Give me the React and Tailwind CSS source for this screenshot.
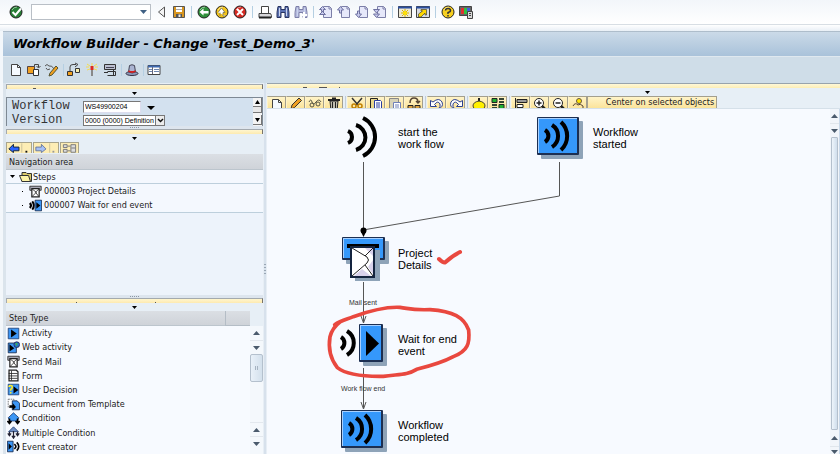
import clsx from 'clsx';

const Svg = ({ children, className = 'size-4', box = '0 0 16 16' }) => (
  <svg viewBox={box} className={clsx('shrink-0', className)} fill="none" stroke="#222" strokeWidth="1" aria-hidden="true">
    {children}
  </svg>
);

// Circles with a symbol in the standard toolbar
const Ball = ({ fill, children }) => (
  <Svg>
    <circle cx="8" cy="8" r="6" fill={fill} stroke="#222" />
    <path d="M4 6Q6 3 9 3" stroke="#fff" opacity=".5" />
    {children}
  </Svg>
);

const Binoculars = ({ fill = '#5a70b0', stroke = '#2a3560', children }) => (
  <Svg>
    <path d="M3 2.500h3v3h4v-3h3l1 6v5h-4v-5h-4v5H2v-5z" fill={fill} stroke={stroke} />
    <path d="M4.500 4v8M11.500 4v8" stroke="#c9d3ee" />
    {children}
  </Svg>
);

const PageArrow = ({ d }) => (
  <Svg>
    <path d="M5.500 2.500h6l2 2v9h-8z" fill="#e6e8fa" stroke="#7c7fa8" />
    <path d="M11 2.500v2.500h2.500" stroke="#7c7fa8" />
    <path d={d} fill="#c9cbee" stroke="#6e71a0" />
  </Svg>
);

const BlankPage = () => (
  <Svg>
    <path d="M3.500 2.500h6l3 3v8h-9z" fill="#f5faff" stroke="#444" />
    <path d="M9.500 2.500v3h3" stroke="#444" />
  </Svg>
);

const standardIcons = [
  { name: 'Back list', icon: <Svg><path d="M11.500 3v10l-6-5z" fill="#f3f3f3" stroke="#555" /></Svg> },
  {
    name: 'Save',
    icon: (
      <Svg>
        <path d="M2.500 2.500h11v11h-11z" fill="#d9961e" stroke="#555" />
        <path d="M5 3h6v5H5z" fill="#fff" stroke="none" />
        <path d="M5 5.500h6" stroke="#aaa" />
        <path d="M5 10h6v3.500H5z" fill="#555" stroke="none" />
        <path d="M8.500 10.500v2.500" stroke="#eee" strokeWidth="2" />
      </Svg>
    ),
  },
  null,
  { name: 'Back', icon: <Ball fill="#2f8f3a"><path d="M3.500 8 7.500 4.500V7h5v2.500h-5V11.500z" fill="#fff" stroke="none" /></Ball> },
  { name: 'Exit', icon: <Ball fill="#f4c51c"><path d="M4 8.500 7.500 4 11 8.500H9V12h3M6 8.500V12" fill="#fff" stroke="#665" strokeWidth=".7" /></Ball> },
  { name: 'Cancel', icon: <Ball fill="#d42a22"><path d="m5 5 6 6M11 5l-6 6" stroke="#fff" strokeWidth="2" /></Ball> },
  null,
  {
    name: 'Print',
    icon: (
      <Svg>
        <path d="M4.500 2.500h7v7h-7z" fill="#fff" stroke="#444" />
        <path d="M2 9.500h11.500l1 2v2H2z" fill="#d7d7da" stroke="#444" />
        <path d="M2 13.500h12" strokeWidth="2" />
      </Svg>
    ),
  },
  { name: 'Find', icon: <Binoculars /> },
  { name: 'Find next', icon: <Binoculars fill="#b5b9dc" stroke="#7c7fa8"><path d="M11 8v6M8 11h6" stroke="#fff" strokeWidth="2" /></Binoculars> },
  null,
  { name: 'First page', icon: <PageArrow d="M1.500 5.500 4.500 2.500l3 3h-2v2h-2v-2zM1.500 10.500 4.500 7.500l3 3z" /> },
  { name: 'Previous page', icon: <PageArrow d="M1.500 6 4.500 2.500l3 3.500h-2v3h-2v-3z" /> },
  { name: 'Next page', icon: <PageArrow d="M1.500 10 4.500 13.500l3-3.500h-2v-3h-2v3z" /> },
  { name: 'Last page', icon: <PageArrow d="M1.500 5.500h6l-3 3.500zM1.500 10h6l-3 3.500z" /> },
  null,
  {
    name: 'New session',
    icon: (
      <Svg>
        <path d="M1.500 2.500h13v11h-13z" fill="#ece7d5" stroke="#444" />
        <path d="M1 3.500h14" stroke="#2b4f9e" strokeWidth="2" />
        <path d="M8 5v8M4 9h8M5 6l6 6M11 6l-6 6" stroke="#d9b400" />
        <circle cx="8" cy="9" r="2" fill="#ffe100" stroke="none" />
      </Svg>
    ),
  },
  {
    name: 'Create shortcut',
    icon: (
      <Svg>
        <path d="M1.500 2.500h13v11h-13z" fill="#d8dbe2" stroke="#444" />
        <path d="M1 3.500h14" stroke="#2b4f9e" strokeWidth="2" />
        <path d="M3.500 13V10l4-3H6V5.500h5.500V11H10V9l-4 4z" fill="#ffd800" stroke="#443" strokeWidth=".7" />
      </Svg>
    ),
  },
  null,
  { name: 'Help', icon: <Ball fill="#f6cf1e"><path d="M5.500 6.500Q5.500 4.500 8 4.500T10.500 6.500Q10.500 8 8 8.500V10M8 11v1.500" stroke="#333" strokeWidth="1.500" /></Ball> },
  {
    name: 'Customize layout',
    icon: (
      <Svg>
        <path d="M1.500 2.500h12v9h-12z" fill="#666" stroke="#444" />
        <path d="M4.500 4v6" stroke="#e03030" strokeWidth="3" />
        <path d="M7.500 4v6" stroke="#30c040" strokeWidth="3" />
        <path d="M10.500 4v4" stroke="#4060e0" strokeWidth="3" />
        <path d="M9.500 7.500h5v7h-5z" fill="#d8d8d8" stroke="#444" />
        <path d="M11 9.500h2M11 11.500h2" stroke="#444" />
      </Svg>
    ),
  },
];

const appIcons = [
  { name: 'Create', icon: <BlankPage /> },
  {
    name: 'Other object',
    icon: (
      <Svg>
        <path d="M1.500 4.500h7v7h-7z" fill="#f0a020" stroke="#544" />
        <path d="M7.500 7.500h5v6h-5z" fill="#fff" stroke="#333" />
        <path d="M8.500 4.500V2.500h4v3M10.500 4l2 2 2-2" stroke="#444" />
      </Svg>
    ),
  },
  {
    name: 'Display or change',
    icon: (
      <Svg>
        <path d="M1 4q2-3 4 0 3-1 5 3M2 6q1 3 4 1" stroke="#555" />
        <path d="m6 11 6-7 2 2-6 7-3 1z" fill="#f0a020" stroke="#553" />
      </Svg>
    ),
  },
  null,
  {
    name: 'Where used',
    icon: (
      <Svg>
        <path d="M4 9V5Q4 2.500 7 2.500h3M9 1l3 1.500L9 5" stroke="#444" />
        <path d="M1.500 9.500h5v4h-5z" fill="#f0a020" stroke="#333" />
        <path d="M9.500 6.500h4v4h-4z" fill="#f6eeb0" stroke="#333" />
      </Svg>
    ),
  },
  {
    name: 'Activate',
    icon: (
      <Svg>
        <path d="M8 1v3M3 2l3 2M13 2l-3 2M3 8l3-1M13 8l-3-1M2 5h3M11 5h3" stroke="#f5dc50" />
        <path d="M8 8v6" stroke="#888" strokeWidth="2" />
        <path d="M8 4v4" stroke="#dd2a20" strokeWidth="3" />
      </Svg>
    ),
  },
  {
    name: 'Test',
    icon: (
      <Svg>
        <path d="M2.500 2.500h11v5h-11z" fill="#bcbfd0" stroke="#333" />
        <path d="M4 5.500h8" stroke="#445" />
        <path d="M5.500 9.500h8v4h-8M2 10.500h4M11.500 8v5" stroke="#333" />
      </Svg>
    ),
  },
  null,
  {
    name: 'Header',
    icon: (
      <Svg>
        <ellipse cx="8" cy="11.500" rx="6" ry="2" fill="#8d98ba" stroke="#334" />
        <path d="M4.500 10 5.500 3.500q2.500-1.500 5 0l1 6.500q-3 2-7 0z" fill="#aab4d2" stroke="#445" />
        <path d="M4.500 9q3.500 2 7 0" stroke="#d32020" strokeWidth="2" />
      </Svg>
    ),
  },
  null,
  {
    name: 'Overview',
    icon: (
      <Svg>
        <path d="M2 3.500h12v9H2z" fill="#fff" stroke="#444" />
        <path d="M2 4.500h12" stroke="#3d69b0" strokeWidth="2" />
        <path d="M6.500 5v7" stroke="#667" />
        <path d="M3 7.500h3M3 9.500h3M8 7.500h5M8 9.500h5" stroke="#6d86b0" />
      </Svg>
    ),
  },
];

const editIcons = [
  { name: 'New', icon: <BlankPage /> },
  { name: 'Change', icon: <Svg><path d="m3 12 1-4 7-7 2.500 2.500-7 7z" fill="#f0a020" stroke="#333" /></Svg> },
  { name: 'Display', icon: <Svg><path d="M2 5q2-4 3 0t4 0q3-4 5 0M3 8a2 2 0 1 0 4 0 2 2 0 1 0-4 0M9 7a2 2 0 1 0 4 0 2 2 0 1 0-4 0" stroke="#554" /></Svg> },
  { name: 'Delete', icon: <Svg><path d="M2 3h12M6 1.500h4" strokeWidth="2" /><path d="M4 4h8l-1 10H5z" fill="#c2bfb0" /><path d="M6.500 5v8M9.500 5v8" /></Svg> },
  null,
  { name: 'Cut', icon: <Svg><path d="m3 1 6 7M13 1 7 8" stroke="#333" strokeWidth="1.500" /><circle cx="5" cy="9" r="2" stroke="#c08000" strokeWidth="1.500" /><circle cx="11" cy="9" r="2" stroke="#c08000" strokeWidth="1.500" /></Svg> },
  { name: 'Copy', icon: <Svg><path d="M2.500 1.500h7v10h-7z" fill="#e8d68a" /><path d="M6.500 3.500h6l1 1v9h-7z" fill="#fff" stroke="#2a3fa0" /><path d="M8 6h4M8 8h4M8 10h4" stroke="#2a3fa0" /></Svg> },
  { name: 'Paste', icon: <Svg><path d="M2.500 1.500h9v10h-9z" fill="#d8d3b8" stroke="#888" /><path d="M6.500 5.500h7v8h-7z" fill="#fff" stroke="#7080b8" /><path d="M8 8h4M8 10h4" stroke="#7080b8" /></Svg> },
  { name: 'Sort', icon: <Svg><path d="M4 6q0-5 4-5 4 0 4 4M10 4l2 2 2-2" stroke="#543" strokeWidth="1.500" /><path d="M2 8.500h5v4H2zM9 8.500h5v4H9z" fill="#d8a040" /></Svg> },
  null,
  { name: 'Undo', icon: <Svg><path d="M1.500 3.500v6h6l-2-2Q9 3 11 7q1 3-2 5 6-2 4-7-3-5-9 0z" fill="#fff" stroke="#2a3f90" /></Svg> },
  { name: 'Redo', icon: <Svg><path d="M14.500 3.500v6h-6l2-2Q7 3 5 7q-1 3 2 5-6-2-4-7 3-5 9 0z" fill="#fff" stroke="#2a3f90" /></Svg> },
  null,
  { name: 'Insert step', icon: <Svg><path d="M8 1v4" strokeWidth="2" /><path d="M2 9q0-4 6-5 6 1 6 5l-2 5H4z" fill="#fff000" stroke="#443" /></Svg> },
  { name: 'Layout', icon: <Svg><path d="M2 1.500h5v4H2zM9 7.500h5v4H9z" fill="#20b030" /><path d="M9 2h5M9 5h5M2 8h5M2 11h5" stroke="#343" strokeWidth="2" /></Svg> },
  null,
  { name: 'Align', icon: <Svg><path d="M2.500 1v12" /><path d="M4 2.500h10v3H4z" fill="#999" /><path d="M4 7.500h6v3H4z" fill="#fff" /></Svg> },
  { name: 'Zoom in', icon: <Svg><circle cx="7" cy="6" r="4.500" fill="#fff" /><path d="M4.500 6h5M7 3.500v5" strokeWidth="1.500" /><path d="m10 9 4 4" strokeWidth="2.500" /></Svg> },
  { name: 'Zoom out', icon: <Svg><circle cx="7" cy="6" r="4.500" fill="#fff" /><path d="M4.500 6h5" strokeWidth="1.500" /><path d="m10 9 4 4" strokeWidth="2.500" /></Svg> },
  { name: 'Agents', icon: <Svg><circle cx="9" cy="4" r="2.500" fill="#ffe500" stroke="#654" /><path d="M3 9q2-4 5-1 2-2 5 1v3" stroke="#543" /></Svg> },
];

const MailIcon = () => (
  <Svg className="size-[13px]">
    <path d="M1 1.500h14v5H1z" fill="#a8a8b4" />
    <path d="M3.500 4.500h9v10h-9z" fill="#fff" strokeWidth="1.500" />
    <path d="m4 5 5 4-5 5M12 5 8 9l4 5" />
  </Svg>
);

const WaitIcon = () => (
  <Svg className="size-[13px]">
    <path d="M1 5q3 3 0 6M4 3q4 5 0 10" strokeWidth="2.500" stroke="#000" />
    <path d="M7.500 1.500h8v13h-8z" fill="#3c96f5" stroke="#124" />
    <path d="M9 4v8l5-4z" fill="#000" stroke="none" />
  </Svg>
);

const BlueSquare = () => <path d="M1.500 1.500h13v13h-13z" fill="#3c96f5" stroke="#1d3c70" />;

const stepTypes = [
  { name: 'Activity', icon: <Svg className="size-[13px]"><BlueSquare /><path d="M5 3v10l7-5z" fill="#000" stroke="none" /></Svg> },
  { name: 'Web activity', icon: <Svg className="size-[13px]"><path d="M1.500 2.500h10v12h-10z" fill="#3c96f5" stroke="#124" /><path d="M3 4v9l6-4z" fill="#000" stroke="none" /><circle cx="12" cy="4.500" r="3.500" fill="#2674c8" stroke="#225" /><path d="M10 3q2-1 3 0l-1 3z" fill="#41b54b" stroke="none" /></Svg> },
  { name: 'Send Mail', icon: <MailIcon /> },
  { name: 'Form', icon: <Svg className="size-[13px]"><path d="M2.500 1.500h9l2 2v11h-11z" fill="#fff" strokeWidth="1.500" /><path d="M2 5.500h11M2 8.500h11M2 11.500h11M5.500 2v12" /></Svg> },
  { name: 'User Decision', icon: <Svg className="size-[13px]"><BlueSquare /><path d="M2.500 5q0-2 2-2t2 2q0 2-2 3v1.500M4.500 11v2" stroke="#ffec20" strokeWidth="2" /><path d="M8 4v9l6-4.500z" fill="#000" stroke="none" /></Svg> },
  { name: 'Document from Template', icon: <Svg className="size-[13px]"><path d="M1.500 1.500h7v10h-7z" fill="#fff" stroke="#666" strokeDasharray="2 1" /><path d="M6.500 3.500h6l3 3v8h-9z" fill="#3c96f5" stroke="#124" /><path d="M3 9h4V6l4 5-4 4v-3H3z" fill="#000" stroke="none" /></Svg> },
  { name: 'Condition', icon: <Svg className="size-[13px]"><path d="m8 1 6.500 6-2 4h-9l-2-4z" fill="#3c96f5" stroke="#1d3c70" /><path d="M3 8v6M13 8v6M.500 11 3 14l2.500-3M10.500 11l2.500 3 2.500-3" stroke="#000" strokeWidth="2" /></Svg> },
  { name: 'Multiple Condition', icon: <Svg className="size-[13px]"><path d="m8 1 6 6H2z" fill="#6d8dc4" stroke="#1d3c70" /><path d="M8 6v9M3 7v4M13 7v4M1 9l2 3 2-3M11 9l2 3 2-3M6 12l2 3 2-3" stroke="#223" strokeWidth="1.500" /></Svg> },
  { name: 'Event creator', icon: <Svg className="size-[13px]"><path d="M.500 1.500h7v13h-7z" fill="#3c96f5" stroke="#124" /><path d="M2 4v8l4-4z" fill="#000" stroke="none" /><path d="M9 5q4 3 0 6M12 3q5 5 0 10" stroke="#000" strokeWidth="2" /></Svg> },
];

const Tri = ({ up = false, className = 'w-[7px] text-[#4a5a6c]' }) => (
  <svg viewBox="0 0 8 4" className={clsx('h-1 shrink-0', className)} fill="currentColor" preserveAspectRatio="none" aria-hidden="true">
    <path d={up ? 'M0 4h8L4 0z' : 'M0 0h8L4 4z'} />
  </svg>
);

const IconRow = ({ items, sep }) =>
  items.map((item, i) =>
    item ? (
      <button key={i} type="button" aria-label={item.name} className="size-4 shrink-0">
        {item.icon}
      </button>
    ) : (
      <span key={i} className={clsx('flex h-3 justify-center', sep)}>
        <span className="w-px bg-[#b5cfe2]" />
      </span>
    )
  );

// Collapsed toolbar of a docked pane, with the drag handle below it
const PaneTop = ({ children }) => (
  <div className="shrink-0">
    <div className="flex h-[5px] border border-b-0 border-t-[#a3a9ae] border-l-[#a3a9ae] border-r-[#77736a] bg-gradient-to-b from-[#fff6cf] to-[#fdeab0]">
      {children}
    </div>
    <div className="flex h-2 items-center justify-center">
      <svg viewBox="0 0 5 3" className="h-[3px] w-[5px]" aria-hidden="true">
        <path d="M0 0h5L2.500 3z" fill="#000" />
      </svg>
    </div>
  </div>
);

const Grip = () => (
  <div className="flex h-[3px] shrink-0 items-center justify-center gap-px bg-[#dde5ee]">
    {[0, 1, 2, 3, 4].map((i) => (
      <span key={i} className="size-px bg-[#8d98a5]" />
    ))}
  </div>
);

const ListScroll = () => (
  <div className="flex w-[13px] flex-col bg-[#f4f8fc]">
    <button type="button" aria-label="Scroll up" className="flex h-[14px] items-center justify-center"><Tri up /></button>
    <button type="button" aria-label="Page down" className="flex h-[14px] items-center justify-center border-t border-[#e3e8ee]"><Tri /></button>
    <div className="flex h-7 items-center justify-center rounded-[2px] border border-[#b4c0cd] bg-gradient-to-r from-[#e9f1f9] to-[#d3e0ec]">
      <span className="h-1 w-[3px] border-x border-[#a6b3c1]" />
    </div>
    <div className="grow" />
    <button type="button" aria-label="Page up" className="flex h-[14px] items-center justify-center border-t border-[#e3e8ee]"><Tri up /></button>
    <button type="button" aria-label="Scroll down" className="mb-1 flex h-[14px] items-center justify-center border-t border-[#e3e8ee]"><Tri /></button>
  </div>
);

const NavPanel = () => (
  <aside className="flex w-[257px] shrink-0 flex-col pt-px">
    <PaneTop><span className="ml-[26px] mt-[3px] h-px w-[3px] bg-[#555]" /></PaneTop>

    <div className="flex h-[29px] shrink-0 border border-b-0 border-[#7e8994] bg-[#d3e1ef]">
      <div className="grow overflow-hidden pl-[5px] font-['Liberation_Mono','Courier_New',monospace] text-[12px] text-[#333]">
        <div className="flex h-[15px] items-center">
          <label htmlFor="workflow" className="w-[71px]">Workflow</label>
          <input id="workflow" defaultValue="WS49900204" className="mt-[2px] h-3 w-[58px] border border-r-[#dde] border-b-[#dde] border-[#777] bg-white px-px font-['Liberation_Sans',Arial,sans-serif] text-[7px] text-black" />
          <Tri className="ml-[6px] mt-1 w-2 text-black" />
        </div>
        <div className="flex h-[14px] items-center">
          <label htmlFor="version" className="w-[71px]">Version</label>
          <div className="relative">
            <select id="version" className="block h-[11px] w-[82px] appearance-none border border-[#777] bg-white pl-px font-['Liberation_Sans',Arial,sans-serif] text-[7px] leading-[9px] text-black">
              <option>0000 (0000) Definition</option>
            </select>
            <span className="pointer-events-none absolute inset-y-0 right-0 flex w-[10px] items-center justify-center border border-[#777] bg-[#ececec]">
              <svg viewBox="0 0 7 5" className="h-[5px] w-[7px]" fill="none" stroke="#111" strokeWidth="1.500"><path d="m1 1 2.500 2.500L6 1" /></svg>
            </span>
          </div>
        </div>
      </div>
      <div className="flex w-[9px] flex-col bg-[#f4f4f4]">
        <button type="button" aria-label="Form up" className="flex h-[9px] items-center justify-center border-r border-b border-[#777]"><Tri up className="w-[5px] text-black" /></button>
        <div className="h-[6px] border-r border-b border-[#777] bg-[#e8e8e8]" />
        <button type="button" aria-label="Form down" className="mt-[2px] flex h-[10px] items-center justify-center border-r border-b border-[#777]"><Tri className="w-[5px] text-black" /></button>
      </div>
    </div>
    <Grip />

    <PaneTop />
    <div className="flex h-3 shrink-0 gap-px overflow-hidden pb-px">
      <button type="button" aria-label="Previous" className="flex w-[26px] border border-b-0 border-[#a8a48c] bg-[#fdedb5]">
        <svg viewBox="0 0 26 10" className="h-[10px] w-[26px]"><path d="m2 6 5-5v3h6v4H7v2z" fill="#2a63ff" stroke="#123" /><path d="M16 0v10" stroke="#c9c09a" /><path d="M20 9h2" stroke="#111" strokeWidth="2" /></svg>
      </button>
      <button type="button" aria-label="Next" className="flex w-[26px] border border-b-0 border-[#a8a48c] bg-[#fdedb5]">
        <svg viewBox="0 0 26 10" className="h-[10px] w-[26px]"><path d="M13 6 8 1v3H2v4h6v2z" fill="#a5bff5" stroke="#68789a" /><path d="M17 0v10" stroke="#c9c09a" /><path d="M20 9h2" stroke="#999" strokeWidth="2" /></svg>
      </button>
      <button type="button" aria-label="Overview tree" className="flex w-[19px] border border-b-0 border-[#a8a48c] bg-[#fdedb5]">
        <svg viewBox="0 0 18 10" className="h-[10px] w-[18px]" fill="#ddd" stroke="#777"><path d="M2.500 1.500h4v3h-4zM2.500 6.500h4v3h-4zM7 3h3M7 8h3M10.500 1.500h5v8h-5zM11 5h4" /></svg>
      </button>
    </div>

    <h2 className="flex h-4 shrink-0 items-center border-b border-[#bcc5cd] bg-gradient-to-b from-[#dbdfe4] to-[#cfd3d9] pl-[3px]">Navigation area</h2>
    <ul className="shrink-0 bg-[#f4f8fe]">
      <li>
        <div className="flex h-[14px] items-center gap-1 border-b border-[#bdcfdc] pl-1">
          <svg viewBox="0 0 5 3" className="h-[3px] w-[5px]"><path d="M0 0h5L2.500 3z" /></svg>
          <div className="flex items-center">
            <svg viewBox="0 0 14 11" className="h-[11px] w-[14px]" stroke="#333"><path d="M3 1.500h4l1 1h4.500v8H3z" fill="#d9c869" /><path d="M.500 4.500h9l2 6H3z" fill="#fdf3a5" /></svg>
            Steps
          </div>
        </div>
        <ul className="border-b border-[#bdcfdc]">
          <li className="flex h-[14px] items-center gap-[2px] pl-4"><span className="mr-1 size-px bg-black" /><MailIcon />000003 Project Details</li>
          <li className="flex h-[14px] items-center gap-[2px] pl-4"><span className="mr-1 size-px bg-black" /><WaitIcon />000007 Wait for end event</li>
        </ul>
      </li>
    </ul>
    <div className="h-[82px] shrink-0 bg-[#edf3fb]" />
    <Grip />

    <PaneTop>
      <span className="ml-[69px] mt-[3px] size-px bg-[#555]" />
      <span className="ml-[78px] mt-[3px] size-px bg-[#555]" />
    </PaneTop>
    <div className="flex h-[15px] shrink-0 pr-[13px]">
      <h2 className="flex grow items-center border-b border-[#bcc5cd] bg-gradient-to-b from-[#dbdfe4] to-[#cfd3d9] pl-[3px]">Step Type</h2>
      <span className="w-[25px] border-b border-l border-[#b4bdc6] bg-gradient-to-b from-[#dbdfe4] to-[#cfd3d9]" />
    </div>
    <div className="flex min-h-0 grow">
      <ul className="flex grow flex-col bg-[#f7faff]">
        {stepTypes.map((step) => (
          <li key={step.name} className="flex flex-1 items-center gap-[2px] pl-px">
            {step.icon}
            {step.name}
          </li>
        ))}
      </ul>
      <ListScroll />
    </div>
  </aside>
);

const Waves = ({ x, y }) => (
  <g transform={`translate(${x} ${y})`} fill="none" stroke="#000" strokeWidth="4">
    <path d="M8 13a7 7 0 0 1 0 12M15 8a13 13 0 0 1 0 22M24 5a19 19 0 0 1 0 28" />
  </g>
);

const BlueBox = ({ x, y, w, h }) => (
  <g>
    <rect x={x + 4} y={y + 4} width={w} height={h} rx="1" fill="#8ea3b8" />
    <rect x={x} y={y} width={w} height={h} rx="1" fill="#1c2f52" />
    <rect x={x + 1} y={y + 1} width={w - 3} height={h - 3} fill="#a8d0ff" />
    <rect x={x + 2} y={y + 2} width={w - 4} height={h - 4} fill="#3598fb" />
  </g>
);

const nodeLabels = [
  { text: ['start the', 'work flow'], place: 'left-[131px] top-[17px]' },
  { text: ['Workflow', 'started'], place: 'left-[326px] top-[17px]' },
  { text: ['Project', 'Details'], place: 'left-[131px] top-[138px]' },
  { text: ['Wait for end', 'event'], place: 'left-[131px] top-[224px]' },
  { text: ['Workflow', 'completed'], place: 'left-[131px] top-[310px]' },
];

const Diagram = () => (
  <div className="relative min-w-0 grow overflow-hidden bg-[#f7faff] font-['Liberation_Sans',Arial,sans-serif] text-[11px] leading-[12px] text-black">
    <svg viewBox="0 0 563 345" className="absolute left-0 top-0 h-[345px] w-[563px]" fill="none" aria-hidden="true">
      {/* connectors */}
      <g stroke="#555">
        <path d="M96.500 53v73M292.500 53v34L96 121M96.500 173v40M96.500 259v40" />
        <path d="m94 207 2.500 7 2.500-7M94 293l2.500 7 2.500-7" />
      </g>
      <circle cx="96.500" cy="121.500" r="3" fill="#000" />
      <path d="M94 123h5l-2.500 5z" fill="#000" />

      {/* start event */}
      <path d="M81 22a6.500 6.500 0 0 1 0 12M89 16a13 13 0 0 1 0 25M96 9a21 21 0 0 1 0 38" stroke="#000" strokeWidth="4" />

      <BlueBox x={270} y={8} w={42} h={38} />
      <Waves x={270} y={8} />

      {/* mail step */}
      <BlueBox x={75} y={128} w={43} h={23} />
      <path d="M88 141h25v31H88z" fill="#8ea3b8" />
      <path d="M80 137h32" stroke="#000" strokeWidth="4" />
      <path d="M84 138h23v30H84z" fill="#fff" stroke="#14243f" strokeWidth="2" />
      <path d="M98 139h8v8zM101 158l5-7v14zM87 167h17l-9-7z" fill="#d9d2ec" />
      <path d="m85 139 15 9q3 3 0 6l-15 13M106 139l-8 8M98 156l8 11" stroke="#222" />

      {/* wait step */}
      <path d="M74 228a7 7 0 0 1 0 12M80 222a14 14 0 0 1 0 24" stroke="#000" strokeWidth="4" />
      <BlueBox x={92} y={215} w={24} h={38} />
      <path d="M99 222v25l13-12.500z" fill="#000" />

      <BlueBox x={74} y={301} w={42} h={38} />
      <Waves x={74} y={301} />
    </svg>

    {nodeLabels.map((label) => (
      <div key={label.place} className={clsx('absolute whitespace-nowrap', label.place)}>
        {label.text[0]}
        <br />
        {label.text[1]}
      </div>
    ))}
    <span className="absolute left-[82px] top-[188px] whitespace-nowrap text-[7px] text-[#333]">Mail sent</span>
    <span className="absolute left-[74px] top-[274px] whitespace-nowrap text-[7px] text-[#333]">Work flow end</span>

    {/* hand-drawn marks */}
    <svg viewBox="0 0 563 345" className="pointer-events-none absolute left-0 top-0 h-[345px] w-[563px]" fill="none" stroke="#e9483f" strokeLinecap="round" strokeLinejoin="round" aria-hidden="true">
      <path d="M172 150q4 4 6 3.500Q185 147 193 143" strokeWidth="4" />
      <path
        transform="translate(53 191) scale(.3333)"
        strokeWidth="11"
        d="M44 74C62 62 80 58 100 50 150 32 200 20 240 22 270 26 275 31 330 29 400 34 432 52 446 90 450 130 444 152 400 170 370 186 330 198 290 208 260 226 240 222 190 229 130 230 80 225 52 203 30 175 25 140 30 110 36 88 44 78 60 66"
      />
    </svg>
  </div>
);

const CanvasScroll = () => (
  <div className="flex w-[10px] shrink-0 flex-col border-r border-[#c9d9ea] bg-[#f1f5fa]">
    <button type="button" aria-label="Canvas up" className="flex h-[14px] items-center justify-center"><Tri up /></button>
    <button type="button" aria-label="Canvas page down" className="flex h-[14px] items-center justify-center border-t border-[#e0e6ec]"><Tri /></button>
    <div className="mx-px grow rounded-[1px] border border-[#b4c0cd] bg-gradient-to-r from-[#eef5fb] to-[#d0deec]" />
    <button type="button" aria-label="Canvas page up" className="flex h-4 shrink-0 items-center justify-center"><Tri up /></button>
    <button type="button" aria-label="Canvas down" className="flex h-2 shrink-0 items-end justify-center border-t border-[#e0e6ec]"><Tri /></button>
  </div>
);

const Workspace = () => (
  <main className="flex min-w-0 grow flex-col">
    <div className="shrink-0 border-t border-[#98a3ac] bg-[#e7eff6]">
      <div className="flex h-[4px] items-end gap-3 bg-gradient-to-b from-[#fff8d8] to-[#fdeeb5] pl-9">
        <span className="h-px w-1 bg-[#555]" />
        <span className="h-px w-2 bg-[#555]" />
        <span className="h-px w-px bg-[#555]" />
      </div>
      <div className="flex h-2 items-center justify-center pl-[187px]">
        <svg viewBox="0 0 5 3" className="h-[3px] w-[5px]"><path d="M0 0h5L2.500 3z" /></svg>
      </div>
      <div className="flex h-3 overflow-hidden">
        {editIcons.map((item, i) =>
          item ? (
            <button key={i} type="button" aria-label={item.name} className="flex w-[19px] shrink-0 items-start justify-center border border-b-0 border-[#fff3c8] border-r-[#a39f8e] border-t-[#a39f8e] bg-gradient-to-b from-[#fff4c8] to-[#fbe39a]">
              {item.icon}
            </button>
          ) : (
            <span key={i} className="flex w-1 justify-center"><span className="w-px bg-[#c3ced8]" /></span>
          )
        )}
        <button type="button" className="flex w-[130px] shrink-0 items-start justify-center whitespace-nowrap border border-b-0 border-[#a39f8e] bg-gradient-to-b from-[#fff4c8] to-[#fbe39a] pl-4 text-[9px] leading-[11px]">
          Center on selected objects
        </button>
      </div>
      <div className="h-px bg-[#d5e0e9]" />
    </div>
    <div className="flex min-h-0 grow">
      <Diagram />
      <CanvasScroll />
    </div>
  </main>
);

export default function App() {
  return (
    <div className="flex h-screen flex-col overflow-hidden bg-[#e7eff6] font-['DejaVu_Sans_Condensed',Tahoma,'DejaVu_Sans',sans-serif] text-[9px] leading-[12px] text-[#222]">
      <header className="shrink-0">
        <div className="flex h-6 items-center gap-[2px] bg-gradient-to-b from-[#f2f6fa] to-white pl-2">
          <button type="button" aria-label="Enter" className="mr-[5px] size-4">
            <Ball fill="#277f35"><path d="m4.500 8 3 3L13 4.500" stroke="#fff" strokeWidth="2" /></Ball>
          </button>
          <div className="relative">
            <input aria-label="Command" className="block h-4 w-[120px] border border-[#b9bfc6] bg-white px-1" />
            <span className="pointer-events-none absolute inset-y-0 right-1 flex items-center"><Tri className="w-[7px] text-[#3f6084]" /></span>
          </div>
          <IconRow items={standardIcons} sep="w-[5px]" />
        </div>
        <div className="h-[7px] border-t border-[#d8dee4] bg-gradient-to-b from-white to-[#e9eff6]" />
      </header>

      <div className="flex min-h-0 grow flex-col border-l-[3px] border-[#f3f7fb]">
        <h1 className="flex h-[25px] shrink-0 items-center border-t border-[#aebdcb] bg-gradient-to-b from-[#cbdae8] to-[#a9c2da] pl-[10px] font-['DejaVu_Sans',Verdana,sans-serif] text-[13px] font-bold italic leading-4 text-black">
          Workflow Builder - Change 'Test_Demo_3'
        </h1>
        <div className="flex h-[27px] shrink-0 items-center gap-[2px] border-t border-[#dfe8ef] bg-[#cfdde8] pl-[5px]">
          <IconRow items={appIcons} sep="w-[2px]" />
        </div>
        <div className="flex min-h-0 grow border-l-[3px] border-[#dbe4ec]">
          <NavPanel />
          <div className="flex w-1 shrink-0 flex-col items-center justify-center gap-[2px] border-x border-[#e7eef5] bg-[#d7e1ec]">
            {[0, 1, 2, 3].map((i) => (
              <span key={i} className="h-px w-[2px] bg-[#9aa6b4]" />
            ))}
          </div>
          <Workspace />
        </div>
      </div>
    </div>
  );
}
